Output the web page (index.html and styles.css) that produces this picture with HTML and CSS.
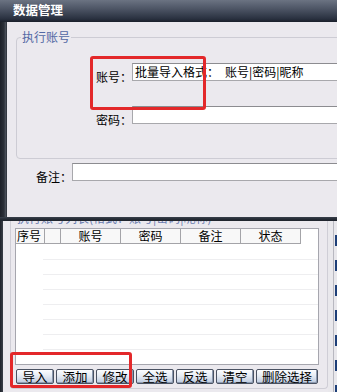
FILE: index.html
```html
<!DOCTYPE html>
<html>
<head>
<meta charset="utf-8">
<link rel="stylesheet" href="styles.css">
</head>
<body>
<div class="screen">
  <div class="titlebar">数据管理</div>
  <div class="dlg-frame">
    <div class="frame-left"></div>
    <div class="dlg-body">
      <div class="group">
        <div class="legend">执行账号</div>
        <div class="row row-acc">
          <div class="lbl">账号：</div>
          <div class="input">批量导入格式：　账号|密码|昵称</div>
        </div>
        <div class="row row-pwd">
          <div class="lbl">密码：</div>
          <div class="input"></div>
        </div>
      </div>
      <div class="row row-note">
        <div class="lbl">备注：</div>
        <div class="input"></div>
      </div>
    </div>
  </div>
  <div class="dlg-bottom"></div>
  <div class="lower">
    <div class="lower-left"></div>
    <div class="lower-main">
      <div class="group2">
        <div class="clip-label"><span>执行账号列表(格式：账号|密码|昵称)</span></div>
        <div class="listview">
          <div class="lv-head">
            <div class="th c1">序号</div>
            <div class="th c2"></div>
            <div class="th c3">账号</div>
            <div class="th c3">密码</div>
            <div class="th c3">备注</div>
            <div class="th c3">状态</div>
          </div>
          <div class="lv-rows"><div class="lv-lines"></div></div>
        </div>
        <div class="buttons">
          <div class="btn">导入</div>
          <div class="btn">添加</div>
          <div class="btn">修改</div>
          <div class="btn">全选</div>
          <div class="btn">反选</div>
          <div class="btn">清空</div>
          <div class="btn wide">删除选择</div>
        </div>
      </div>
    </div>
    <div class="rightstrip"><div class="rs-line"></div><div class="rs-blocks"></div></div>
  </div>
  <div class="mark mark-top"></div>
  <div class="mark mark-bottom"></div>
</div>
</body>
</html>
```

FILE: styles.css
```css
* { box-sizing: border-box; margin: 0; padding: 0; }
html, body { width: 337px; height: 392px; overflow: hidden; }
body {
  font-family: "Noto Sans CJK SC", "Noto Sans", sans-serif;
  font-size: 12px;
  color: #000;
  background: #ebe9ee;
}
.screen {
  position: relative;
  width: 337px;
  height: 392px;
  overflow: hidden;
  display: flex;
  flex-direction: column;
}
.titlebar {
  height: 22px;
  flex: none;
  background: linear-gradient(#6b7382, #4d5565 40%, #2a3140 85%, #1b202b);
  color: #fff;
  font-weight: bold;
  font-size: 12.5px;
  line-height: 20px;
  padding-left: 13px;
  white-space: nowrap;
}
.dlg-frame {
  height: 195px;
  flex: none;
  display: flex;
}
.frame-left {
  width: 7px;
  flex: none;
  background: linear-gradient(to right, #1c2028, #2c313a 60%, #4c525c 75%, #2a2f38);
}
.dlg-body {
  flex: 1;
  min-width: 0;
  background: #ebe9ee;
  overflow: hidden;
  display: flex;
  flex-direction: column;
}
.group {
  margin: 15px -20px 0 9px;
  height: 122px;
  border: 1px solid #cdccd4;
  border-radius: 4px;
  flex: none;
}
.legend {
  width: fit-content;
  margin: -8px 0 0 4px;
  padding: 0 1px;
  line-height: 14px;
  background: #ebe9ee;
  color: #5268a4;
  white-space: nowrap;
}
.row {
  display: flex;
  align-items: flex-start;
}
.lbl {
  width: 36px;
  flex: none;
  line-height: 14px;
  margin-top: 7px;
  white-space: nowrap;
}
.input {
  flex: 1;
  height: 18px;
  background: #fff;
  border: 1px solid #a8a8ac;
  border-top-color: #8c8c90;
  line-height: 16px;
  padding-left: 2px;
  white-space: nowrap;
  overflow: hidden;
}
.row-acc { margin-top: 19px; }
.row-acc .lbl { margin-left: 79px; }
.row-pwd { margin-top: 22px; }
.row-pwd .lbl { margin-left: 79px; }
.row-note { margin: 4px -10px 0 29px; }

.dlg-bottom {
  height: 4px;
  flex: none;
  background: linear-gradient(#3a414c, #262c36 50%, #1e232c);
}
.lower {
  flex: 1;
  display: flex;
  background: #ebe9ee;
}
.lower-left {
  width: 3px;
  flex: none;
  background: linear-gradient(to right, #1e222a, #3a3f48);
}
.lower-main {
  width: 325px;
  flex: none;
  padding-left: 7px;
}
.group2 {
  width: 318px;
  height: 168px;
  border: 1px solid #cfced6;
  border-top: none;
  border-radius: 0 0 4px 4px;
}
.clip-label {
  height: 5px;
  overflow: hidden;
  margin-left: 6px;
}
.clip-label span {
  display: block;
  margin-top: -10px;
  line-height: 14px;
  color: #6a7cb0;
  white-space: nowrap;
}
.listview {
  margin: 2px 0 0 4px;
  width: 304px;
  height: 137px;
  border: 1px solid #a6a6ae;
  background: #fff;
  display: flex;
  flex-direction: column;
}
.lv-head {
  display: flex;
  height: 15px;
  flex: none;
}
.th {
  height: 15px;
  background: #f8f8f8;
  border-right: 1px solid #a4a4a8;
  border-bottom: 1px solid #a4a4a8;
  line-height: 14px;
  text-align: center;
  white-space: nowrap;
}
.th.c1 { width: 29px; text-align: left; padding-left: 1px; }
.th.c2 { width: 16px; }
.th.c3 { width: 60px; }
.lv-rows {
  flex: 1;
  padding-left: 27px;
  padding-top: 1px;
}
.lv-lines {
  height: 100%;
  background: repeating-linear-gradient(to bottom, transparent 0 14px, #eeeef0 14px 15px);
}
.buttons {
  display: flex;
  gap: 2px;
  margin: 4px 0 0 5px;
}
.btn {
  width: 38px;
  height: 15px;
  border: 1px solid #4a5262;
  border-radius: 2px;
  background: linear-gradient(#fcfdff, #e6ebf3 45%, #bccadf);
  box-shadow: inset -1px -1px 0 #8c9ab0;
  font-size: 12.5px;
  line-height: 13px;
  text-align: center;
  white-space: nowrap;
}
.btn.wide { width: 62px; }
.rightstrip {
  flex: 1;
  display: flex;
  background: #e9e8ec;
}
.rs-line {
  margin-left: 5px;
  width: 1px;
  background: #b8b8c0;
}
.rs-blocks {
  flex: 1;
  margin-left: 1px;
  background: repeating-linear-gradient(to bottom, transparent 0 14px, #1e3f78 14px 25px);
}
.mark {
  position: absolute;
  border: 3px solid #e3282a;
  border-radius: 3px;
}
.mark-top { left: 90px; top: 56px; width: 116px; height: 54px; }
.mark-bottom { left: 10px; top: 352px; width: 122px; height: 36px; }
```
